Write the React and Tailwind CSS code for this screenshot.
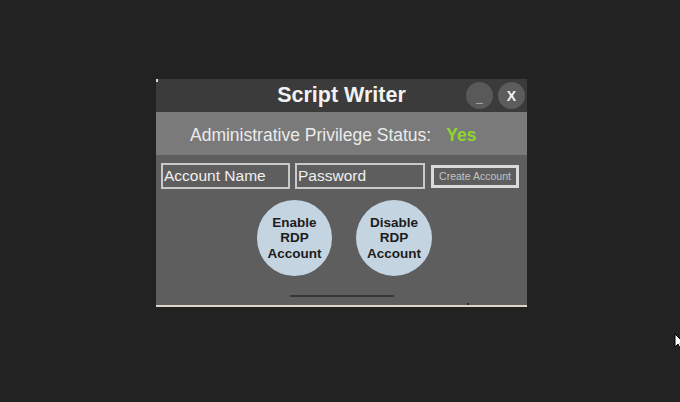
// Script Writer window mock
export default function App() {
  return (
    <div
      className="relative w-[680px] h-[402px] bg-[#222222] pt-[79px] pl-[156px] overflow-hidden"
      style={{ fontFamily: '"Liberation Sans", Arial, sans-serif' }}
    >
      <div className="w-[371px] flex flex-col">
        {/* title bar */}
        <div className="relative h-[33px] bg-[#3b3b3b] grid grid-cols-[1fr_auto_1fr] items-center">
          <div className="absolute left-0 top-0 w-[2px] h-[3px] bg-[#d8d8d8]" />
          <div />
          <div className="text-[21.5px] font-bold text-[#f2f2f2] leading-none">Script Writer</div>
          <div className="flex justify-end items-center gap-[5px] pr-[2px]">
            <div className="w-[27px] h-[27px] rounded-full bg-[#595959] flex items-center justify-center text-[#dcdcdc] text-[12px] font-bold leading-none pt-[5px]">
              _
            </div>
            <div className="w-[27px] h-[27px] rounded-full bg-[#5c5c5c] flex items-center justify-center text-[#f2f2f2] text-[14px] font-bold leading-none">
              X
            </div>
          </div>
        </div>

        {/* status bar */}
        <div className="h-[43px] bg-[#7a7a7a] flex items-center pl-[34px] pt-[3px]">
          <span className="text-[17.5px] text-[#ebebeb]">Administrative Privilege Status:</span>
          <span className="text-[17.5px] font-bold text-[#8fd62e] ml-[15px]">Yes</span>
        </div>

        {/* body */}
        <div className="h-[150px] bg-[#5e5e5e] flex flex-col pt-[8px]">
          <div className="flex items-center pl-[5px]">
            <div className="w-[129px] h-[26px] border-2 border-[#c9c9c9] text-[15.5px] text-[#f0f0f0] leading-none flex items-center pl-[1px]">
              Account Name
            </div>
            <div className="w-[130px] h-[26px] ml-[5px] border-2 border-[#c9c9c9] text-[15.5px] text-[#f0f0f0] leading-none flex items-center pl-[1px]">
              Password
            </div>
            <div className="w-[88px] h-[23px] ml-[6px] border-[3px] border-[#dadada] text-[10.5px] text-[#c4c4c4] leading-none flex items-center justify-center">
              Create Account
            </div>
          </div>

          <div className="flex justify-center gap-[24px] mt-[11px] pl-[6px]">
            <div className="w-[75px] h-[76px] rounded-full bg-[#c5d4e1] flex items-center justify-center text-center text-[13.5px] font-bold text-[#1c1c1c] leading-[15.5px]">
              Enable<br />RDP<br />Account
            </div>
            <div className="w-[76px] h-[76px] rounded-full bg-[#c5d4e1] flex items-center justify-center text-center text-[13.5px] font-bold text-[#1c1c1c] leading-[15.5px]">
              Disable<br />RDP<br />Account
            </div>
          </div>

          <div className="ml-[134px] mt-[19px] w-[104px] h-[2px] bg-[#363636]" />
          <div className="flex-1" />
          <div className="ml-[311px] w-[2px] h-[2px] bg-[#2a2a2a]" />
        </div>
        <div className="h-[2px] bg-[#ddd5c6]" />
      </div>

      {/* mouse pointer */}
      <svg className="absolute left-[674px] top-[333px]" width="12" height="18" viewBox="0 0 12 18">
        <path d="M1 1 L1 14 L4 11 L6.5 16 L8.5 15 L6 10 L10 10 Z" fill="#ffffff" stroke="#000000" strokeWidth="1" />
      </svg>
    </div>
  );
}
